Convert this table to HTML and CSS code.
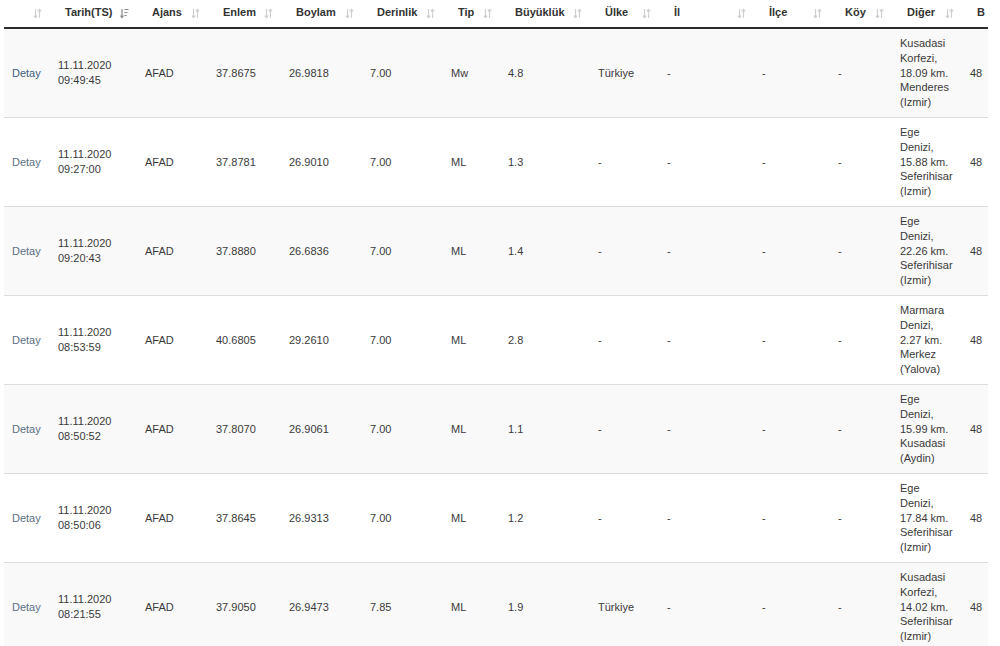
FILE: index.html
```html
<!DOCTYPE html>
<html lang="tr">
<head>
<meta charset="utf-8">
<link rel="stylesheet" href="styles.css">
</head>
<body>
<div class="wrap">
<table class="tbl">
<colgroup>
<col class="w46"><col class="w87"><col class="w71"><col class="w73"><col class="w81"><col class="w81"><col class="w57"><col class="w90"><col class="w69"><col class="w95"><col class="w76"><col class="w62"><col class="w70"><col class="w26">
</colgroup>
<thead>
<tr>
<th><svg class="si" viewBox="0 0 9 11"><path d="M2.5 1v8.5M0.8 7.6l1.7 2 1.7-2M6.5 10V1.5M4.8 3.4l1.7-2 1.7 2"/></svg></th>
<th>Tarih(TS)<svg class="si act" viewBox="0 0 9 11"><path d="M2 1v8.5M0.5 7.6l1.5 2 1.5-2M4.5 1.5h4M4.5 4.5h3M4.5 7.5h2"/></svg></th>
<th>Ajans<svg class="si" viewBox="0 0 9 11"><path d="M2.5 1v8.5M0.8 7.6l1.7 2 1.7-2M6.5 10V1.5M4.8 3.4l1.7-2 1.7 2"/></svg></th>
<th>Enlem<svg class="si" viewBox="0 0 9 11"><path d="M2.5 1v8.5M0.8 7.6l1.7 2 1.7-2M6.5 10V1.5M4.8 3.4l1.7-2 1.7 2"/></svg></th>
<th>Boylam<svg class="si" viewBox="0 0 9 11"><path d="M2.5 1v8.5M0.8 7.6l1.7 2 1.7-2M6.5 10V1.5M4.8 3.4l1.7-2 1.7 2"/></svg></th>
<th>Derinlik<svg class="si" viewBox="0 0 9 11"><path d="M2.5 1v8.5M0.8 7.6l1.7 2 1.7-2M6.5 10V1.5M4.8 3.4l1.7-2 1.7 2"/></svg></th>
<th>Tip<svg class="si" viewBox="0 0 9 11"><path d="M2.5 1v8.5M0.8 7.6l1.7 2 1.7-2M6.5 10V1.5M4.8 3.4l1.7-2 1.7 2"/></svg></th>
<th>Büyüklük<svg class="si" viewBox="0 0 9 11"><path d="M2.5 1v8.5M0.8 7.6l1.7 2 1.7-2M6.5 10V1.5M4.8 3.4l1.7-2 1.7 2"/></svg></th>
<th>Ülke<svg class="si" viewBox="0 0 9 11"><path d="M2.5 1v8.5M0.8 7.6l1.7 2 1.7-2M6.5 10V1.5M4.8 3.4l1.7-2 1.7 2"/></svg></th>
<th>İl<svg class="si" viewBox="0 0 9 11"><path d="M2.5 1v8.5M0.8 7.6l1.7 2 1.7-2M6.5 10V1.5M4.8 3.4l1.7-2 1.7 2"/></svg></th>
<th>İlçe<svg class="si" viewBox="0 0 9 11"><path d="M2.5 1v8.5M0.8 7.6l1.7 2 1.7-2M6.5 10V1.5M4.8 3.4l1.7-2 1.7 2"/></svg></th>
<th>Köy<svg class="si" viewBox="0 0 9 11"><path d="M2.5 1v8.5M0.8 7.6l1.7 2 1.7-2M6.5 10V1.5M4.8 3.4l1.7-2 1.7 2"/></svg></th>
<th>Diğer<svg class="si" viewBox="0 0 9 11"><path d="M2.5 1v8.5M0.8 7.6l1.7 2 1.7-2M6.5 10V1.5M4.8 3.4l1.7-2 1.7 2"/></svg></th>
<th class="last-h">B</th>
</tr>
</thead>
<tbody>
<tr><td><a class="lnk first">Detay</a></td><td>11.11.2020<br>09:49:45</td><td>AFAD</td><td>37.8675</td><td>26.9818</td><td>7.00</td><td>Mw</td><td>4.8</td><td>Türkiye</td><td>-</td><td>-</td><td>-</td><td>Kusadasi Korfezi, 18.09 km. Menderes (Izmir)</td><td class="last">48</td></tr>
<tr><td><a class="lnk">Detay</a></td><td>11.11.2020<br>09:27:00</td><td>AFAD</td><td>37.8781</td><td>26.9010</td><td>7.00</td><td>ML</td><td>1.3</td><td>-</td><td>-</td><td>-</td><td>-</td><td>Ege Denizi, 15.88 km. Seferihisar (Izmir)</td><td class="last">48</td></tr>
<tr><td><a class="lnk">Detay</a></td><td>11.11.2020<br>09:20:43</td><td>AFAD</td><td>37.8880</td><td>26.6836</td><td>7.00</td><td>ML</td><td>1.4</td><td>-</td><td>-</td><td>-</td><td>-</td><td>Ege Denizi, 22.26 km. Seferihisar (Izmir)</td><td class="last">48</td></tr>
<tr><td><a class="lnk">Detay</a></td><td>11.11.2020<br>08:53:59</td><td>AFAD</td><td>40.6805</td><td>29.2610</td><td>7.00</td><td>ML</td><td>2.8</td><td>-</td><td>-</td><td>-</td><td>-</td><td>Marmara Denizi, 2.27 km. Merkez (Yalova)</td><td class="last">48</td></tr>
<tr><td><a class="lnk">Detay</a></td><td>11.11.2020<br>08:50:52</td><td>AFAD</td><td>37.8070</td><td>26.9061</td><td>7.00</td><td>ML</td><td>1.1</td><td>-</td><td>-</td><td>-</td><td>-</td><td>Ege Denizi, 15.99 km. Kusadasi (Aydin)</td><td class="last">48</td></tr>
<tr><td><a class="lnk">Detay</a></td><td>11.11.2020<br>08:50:06</td><td>AFAD</td><td>37.8645</td><td>26.9313</td><td>7.00</td><td>ML</td><td>1.2</td><td>-</td><td>-</td><td>-</td><td>-</td><td>Ege Denizi, 17.84 km. Seferihisar (Izmir)</td><td class="last">48</td></tr>
<tr><td><a class="lnk">Detay</a></td><td>11.11.2020<br>08:21:55</td><td>AFAD</td><td>37.9050</td><td>26.9473</td><td>7.85</td><td>ML</td><td>1.9</td><td>Türkiye</td><td>-</td><td>-</td><td>-</td><td>Kusadasi Korfezi, 14.02 km. Seferihisar (Izmir)</td><td class="last">48</td></tr>
</tbody>
</table>
</div>
</body>
</html>
```
FILE: styles.css
```css
html, body {
  margin: 0;
  padding: 0;
  background: #ffffff;
}
body {
  font-family: "Liberation Sans", Arial, sans-serif;
  font-size: 11px;
  color: #333333;
}
.wrap {
  margin-left: 4px;
  width: 984px;
  overflow: hidden;
}
.tbl {
  table-layout: fixed;
  width: 984px;
  border-collapse: separate;
  border-spacing: 0;
}
.w46 { width: 46px; }
.w87 { width: 87px; }
.w71 { width: 71px; }
.w73 { width: 73px; }
.w81 { width: 81px; }
.w57 { width: 57px; }
.w90 { width: 90px; }
.w69 { width: 69px; }
.w95 { width: 95px; }
.w76 { width: 76px; }
.w62 { width: 62px; }
.w70 { width: 70px; }
.w26 { width: 26px; }
.tbl th {
  position: relative;
  text-align: left;
  font-weight: bold;
  color: #333333;
  line-height: 15px;
  padding: 5px 20px 7px 15px;
  border-bottom: 2px solid #2a2a2a;
  white-space: nowrap;
  overflow: hidden;
}
.tbl th.last-h {
  padding: 5px 0 7px 15px;
}
.si {
  position: absolute;
  right: 8px;
  top: 8px;
  width: 9px;
  height: 11px;
  fill: none;
  stroke: #cfcfcf;
  stroke-width: 1.2;
}
.si.act {
  stroke: #8a8a8a;
}
.tbl td {
  padding: 7px 8px;
  line-height: 14.8px;
  vertical-align: middle;
  border-bottom: 1px solid #dddddd;
  color: #3a3a3a;
  overflow: hidden;
  white-space: normal;
}
.tbl td.last {
  padding: 7px 0 7px 8px;
  white-space: nowrap;
}
.tbl tbody tr:nth-child(odd) td {
  background: #f9f9f9;
}
.lnk {
  color: #5c7088;
  text-decoration: none;
}
.lnk.first {
  color: #3d5f86;
}
```
